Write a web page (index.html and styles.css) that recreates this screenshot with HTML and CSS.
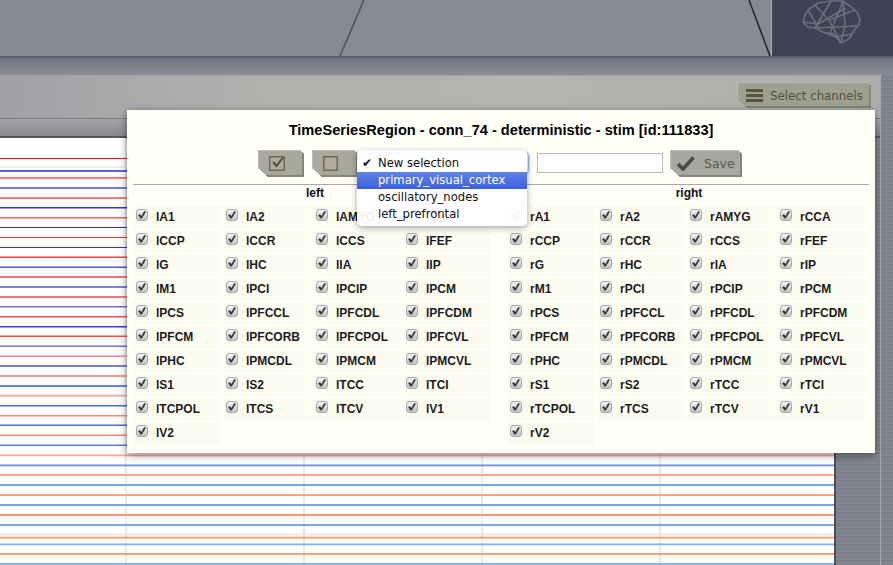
FILE: index.html
```html
<!DOCTYPE html>
<html lang="en">
<head>
  <meta charset="UTF-8" />
  <title>Select channels</title>
  <link rel="stylesheet" href="styles.css">
</head>
<body>
  <header class="topbar">
    <svg class="topbar-art" width="893" height="56" viewBox="0 0 893 56">
      <polygon points="364,0 749,0 770,56 340,56" fill="#888a94" />
      <line x1="364" y1="0" x2="340" y2="56" stroke="#4d4f5b" stroke-width="1.5" />
      <line x1="749" y1="0" x2="770" y2="56" stroke="#23252f" stroke-width="1.5" />
      <rect x="772" y="0" width="121" height="56" fill="#3f4254" />
      <line x1="771.5" y1="0" x2="771.5" y2="56" stroke="#aeb0ba" />
      <g fill="none" stroke="#6c6f7d" stroke-width="1.6">
        <polygon points="803,22 805,15 809,9 818,3 831,1 843,1 850,6 855,10 858,14 860,20 859,25 855,29 852,34 849,39 841,43 836,37 834,34 825,33 815,28 808,27" />
        <polyline points="815,5 829,20 841,43" />
        <polyline points="831,1 815,28" />
        <polyline points="843,1 830,33" />
        <polyline points="803,22 818,24 846,8" />
        <polyline points="815,28 857,26" />
        <polyline points="843,1 845,25 841,43" />
        <polyline points="808,10 819,29" />
        <polyline points="829,20 855,10" />
        <polyline points="820,31 836,37 852,34" />
      </g>
    </svg>
  </header>
  <div class="band"></div>

  <main class="panel">
    <div class="panel-head">
      <button class="btn btn-channels" type="button">
        <span class="bars"><i></i><i></i><i></i></span>
        <span class="btn-text">Select channels</span>
      </button>
    </div>
    <div class="panel-sub"></div>
    <div class="chart-row">
      <div class="chart">
        <svg width="834" height="427" viewBox="0 138 834 427">
          <rect x="0" y="166" width="834" height="2" fill="#eeeeee" />
          <rect x="0" y="533" width="834" height="3" fill="#eeeeee" />
          <g stroke="#e2e2e2" stroke-width="1.5">
            <line x1="126" y1="138" x2="126" y2="565" />
            <line x1="304" y1="138" x2="304" y2="565" />
            <line x1="482" y1="138" x2="482" y2="565" />
            <line x1="660" y1="138" x2="660" y2="565" />
          </g>
          <g fill="none">
            <line x1="0" x2="834" y1="158.5" y2="158.5" stroke="#f50f0f" />
            <line x1="0" x2="834" y1="171" y2="171" stroke="#2a2ad8" stroke-width="1.4" />
            <line x1="0" x2="834" y1="178" y2="178" stroke="#f85050" stroke-width="1.5" />
            <line x1="0" x2="834" y1="188" y2="188" stroke="#4a4ad8" stroke-width="1.6" />
            <line x1="0" x2="834" y1="198" y2="198" stroke="#f47c7c" stroke-width="2" />
            <line x1="0" x2="834" y1="207.7" y2="207.7" stroke="#3535d0" stroke-width="1.5" />
            <line x1="0" x2="834" y1="217.7" y2="217.7" stroke="#f86060" stroke-width="1.5" />
            <line x1="0" x2="834" y1="227.5" y2="227.5" stroke="#3030e0" />
            <line x1="0" x2="834" y1="237.5" y2="237.5" stroke="#f83030" />
            <line x1="0" x2="834" y1="247.5" y2="247.5" stroke="#3030e0" />
            <line x1="0" x2="834" y1="257.3" y2="257.3" stroke="#f84040" stroke-width="1.4" />
            <line x1="0" x2="834" y1="267.3" y2="267.3" stroke="#5858d0" stroke-width="1.6" />
            <line x1="0" x2="834" y1="277" y2="277" stroke="#f47474" stroke-width="2" />
            <line x1="0" x2="834" y1="287" y2="287" stroke="#8080d8" stroke-width="2" />
            <line x1="0" x2="834" y1="297" y2="297" stroke="#f87878" stroke-width="1.8" />
            <line x1="0" x2="834" y1="306.7" y2="306.7" stroke="#6c6cdc" stroke-width="1.6" />
            <line x1="0" x2="834" y1="316.7" y2="316.7" stroke="#f84c4c" stroke-width="1.6" />
            <line x1="0" x2="834" y1="326.7" y2="326.7" stroke="#3c3cd8" stroke-width="1.5" />
            <line x1="0" x2="834" y1="336.3" y2="336.3" stroke="#f85040" stroke-width="1.5" />
            <line x1="0" x2="834" y1="346.3" y2="346.3" stroke="#6c78dc" stroke-width="1.6" />
            <line x1="0" x2="834" y1="356.3" y2="356.3" stroke="#fa8c8c" stroke-width="1.6" />
            <line x1="0" x2="834" y1="366" y2="366" stroke="#7c80d4" stroke-width="1.8" />
            <line x1="0" x2="834" y1="376" y2="376" stroke="#fa9c94" stroke-width="1.8" />
            <line x1="0" x2="834" y1="386" y2="386" stroke="#6c80e0" stroke-width="2" />
            <line x1="0" x2="834" y1="395.7" y2="395.7" stroke="#faa8a0" stroke-width="1.8" />
            <line x1="0" x2="834" y1="405.7" y2="405.7" stroke="#4a70d8" stroke-width="1.6" />
            <line x1="0" x2="834" y1="415.7" y2="415.7" stroke="#f98c74" stroke-width="1.6" />
            <line x1="0" x2="834" y1="425.3" y2="425.3" stroke="#4a70d8" stroke-width="1.6" />
            <line x1="0" x2="834" y1="435.3" y2="435.3" stroke="#f98c74" stroke-width="1.6" />
            <line x1="0" x2="834" y1="445.3" y2="445.3" stroke="#5a80dc" stroke-width="1.6" />
            <line x1="0" x2="834" y1="455.3" y2="455.3" stroke="#faa890" stroke-width="1.8" />
            <line x1="0" x2="834" y1="465.3" y2="465.3" stroke="#6a90e0" stroke-width="1.8" />
            <line x1="0" x2="834" y1="475" y2="475" stroke="#fbac90" stroke-width="2" />
            <line x1="0" x2="834" y1="485" y2="485" stroke="#7aa4e8" stroke-width="2" />
            <line x1="0" x2="834" y1="495" y2="495" stroke="#fca47c" stroke-width="2" />
            <line x1="0" x2="834" y1="505" y2="505" stroke="#7aa4e8" stroke-width="2" />
            <line x1="0" x2="834" y1="515" y2="515" stroke="#fb9a70" stroke-width="1.8" />
            <line x1="0" x2="834" y1="525" y2="525" stroke="#7aa8e8" stroke-width="1.8" />
            <line x1="0" x2="834" y1="537.7" y2="537.7" stroke="#fb9a64" stroke-width="1.8" />
            <line x1="0" x2="834" y1="544.3" y2="544.3" stroke="#84b0ec" stroke-width="1.8" />
            <line x1="0" x2="834" y1="554" y2="554" stroke="#fba070" stroke-width="1.8" />
            <line x1="0" x2="834" y1="564" y2="564" stroke="#84b8ec" stroke-width="2" />
          </g>
        </svg>
      </div>
    </div>
  </main>

  <section class="modal">
    <h2 class="modal-title">TimeSeriesRegion - conn_74 - deterministic - stim [id:111833]</h2>

    <div class="toolbar">
      <button class="btn btn-icon" type="button">
        <svg width="16" height="15" viewBox="0 0 16 15">
          <rect x="0.75" y="0.75" width="14.5" height="13.5" fill="#b2ab9c" stroke="#6e685b" stroke-width="1.5" />
          <path d="M4 6l3.5 4L14 1.5" fill="none" stroke="#4e4c42" stroke-width="2" />
        </svg>
      </button>
      <button class="btn btn-icon" type="button">
        <svg width="15" height="15" viewBox="0 0 15 15">
          <rect x="0.75" y="0.75" width="13.5" height="13.5" fill="#b2ab9c" stroke="#6e685b" stroke-width="1.5" />
        </svg>
      </button>
      <div class="select-slot"></div>
      <input class="name-input" type="text" />
      <button class="btn btn-save" type="button">
        <svg width="18" height="15" viewBox="0 0 18 15">
          <path d="M1 8l5 5L16.5 1.5" fill="none" stroke="#4c4c40" stroke-width="3.6" />
        </svg>
        Save
      </button>
    </div>

    <div class="groups">
      <div class="group">
        <h3 class="group-name">left</h3>
        <div class="cells">
          <label class="cell"><i class="box"></i>lA1</label>
          <label class="cell"><i class="box"></i>lA2</label>
          <label class="cell"><i class="box"></i>lAMYG</label>
          <label class="cell"><i class="box"></i>lCCA</label>
          <label class="cell"><i class="box"></i>lCCP</label>
          <label class="cell"><i class="box"></i>lCCR</label>
          <label class="cell"><i class="box"></i>lCCS</label>
          <label class="cell"><i class="box"></i>lFEF</label>
          <label class="cell"><i class="box"></i>lG</label>
          <label class="cell"><i class="box"></i>lHC</label>
          <label class="cell"><i class="box"></i>lIA</label>
          <label class="cell"><i class="box"></i>lIP</label>
          <label class="cell"><i class="box"></i>lM1</label>
          <label class="cell"><i class="box"></i>lPCI</label>
          <label class="cell"><i class="box"></i>lPCIP</label>
          <label class="cell"><i class="box"></i>lPCM</label>
          <label class="cell"><i class="box"></i>lPCS</label>
          <label class="cell"><i class="box"></i>lPFCCL</label>
          <label class="cell"><i class="box"></i>lPFCDL</label>
          <label class="cell"><i class="box"></i>lPFCDM</label>
          <label class="cell"><i class="box"></i>lPFCM</label>
          <label class="cell"><i class="box"></i>lPFCORB</label>
          <label class="cell"><i class="box"></i>lPFCPOL</label>
          <label class="cell"><i class="box"></i>lPFCVL</label>
          <label class="cell"><i class="box"></i>lPHC</label>
          <label class="cell"><i class="box"></i>lPMCDL</label>
          <label class="cell"><i class="box"></i>lPMCM</label>
          <label class="cell"><i class="box"></i>lPMCVL</label>
          <label class="cell"><i class="box"></i>lS1</label>
          <label class="cell"><i class="box"></i>lS2</label>
          <label class="cell"><i class="box"></i>lTCC</label>
          <label class="cell"><i class="box"></i>lTCI</label>
          <label class="cell"><i class="box"></i>lTCPOL</label>
          <label class="cell"><i class="box"></i>lTCS</label>
          <label class="cell"><i class="box"></i>lTCV</label>
          <label class="cell"><i class="box"></i>lV1</label>
          <label class="cell"><i class="box"></i>lV2</label>
        </div>
      </div>
      <div class="group">
        <h3 class="group-name">right</h3>
        <div class="cells">
          <label class="cell"><i class="box"></i>rA1</label>
          <label class="cell"><i class="box"></i>rA2</label>
          <label class="cell"><i class="box"></i>rAMYG</label>
          <label class="cell"><i class="box"></i>rCCA</label>
          <label class="cell"><i class="box"></i>rCCP</label>
          <label class="cell"><i class="box"></i>rCCR</label>
          <label class="cell"><i class="box"></i>rCCS</label>
          <label class="cell"><i class="box"></i>rFEF</label>
          <label class="cell"><i class="box"></i>rG</label>
          <label class="cell"><i class="box"></i>rHC</label>
          <label class="cell"><i class="box"></i>rIA</label>
          <label class="cell"><i class="box"></i>rIP</label>
          <label class="cell"><i class="box"></i>rM1</label>
          <label class="cell"><i class="box"></i>rPCI</label>
          <label class="cell"><i class="box"></i>rPCIP</label>
          <label class="cell"><i class="box"></i>rPCM</label>
          <label class="cell"><i class="box"></i>rPCS</label>
          <label class="cell"><i class="box"></i>rPFCCL</label>
          <label class="cell"><i class="box"></i>rPFCDL</label>
          <label class="cell"><i class="box"></i>rPFCDM</label>
          <label class="cell"><i class="box"></i>rPFCM</label>
          <label class="cell"><i class="box"></i>rPFCORB</label>
          <label class="cell"><i class="box"></i>rPFCPOL</label>
          <label class="cell"><i class="box"></i>rPFCVL</label>
          <label class="cell"><i class="box"></i>rPHC</label>
          <label class="cell"><i class="box"></i>rPMCDL</label>
          <label class="cell"><i class="box"></i>rPMCM</label>
          <label class="cell"><i class="box"></i>rPMCVL</label>
          <label class="cell"><i class="box"></i>rS1</label>
          <label class="cell"><i class="box"></i>rS2</label>
          <label class="cell"><i class="box"></i>rTCC</label>
          <label class="cell"><i class="box"></i>rTCI</label>
          <label class="cell"><i class="box"></i>rTCPOL</label>
          <label class="cell"><i class="box"></i>rTCS</label>
          <label class="cell"><i class="box"></i>rTCV</label>
          <label class="cell"><i class="box"></i>rV1</label>
          <label class="cell"><i class="box"></i>rV2</label>
        </div>
      </div>
    </div>

    <ul class="menu">
      <li class="menu-item is-checked">New selection</li>
      <li class="menu-item is-active">primary_visual_cortex</li>
      <li class="menu-item">oscillatory_nodes</li>
      <li class="menu-item">left_prefrontal</li>
    </ul>
  </section>
</body>
</html>
```

FILE: styles.css
```css
html, body {
  margin: 0;
  padding: 0;
  height: 565px;
  overflow: hidden;
  background: repeating-linear-gradient(180deg, #7d7f8a 0, #7d7f8a 2px, #838591 2px, #838591 4px);
  font-family: "Liberation Sans", Arial, sans-serif;
}

/* top bar */
.topbar {
  height: 56px;
  background: repeating-linear-gradient(180deg, #86888f 0, #86888f 2px, #888a92 2px, #888a92 4px);
}

.topbar-art {
  display: block;
}

.band {
  height: 19px;
  border-top: 2px solid #5c5e6e;
  box-sizing: border-box;
  background: linear-gradient(180deg, #6f717e, #8c8d93);
}

/* panel with the chart */
.panel {
  width: 880px;
  height: 490px;
  border-right: 1px solid #a9abb3;
  display: flex;
  flex-direction: column;
}

.panel-head {
  height: 44px;
  box-sizing: border-box;
  padding: 6px 9px 0 0;
  display: flex;
  justify-content: flex-end;
  align-items: flex-start;
  background: linear-gradient(90deg, #a0a1a6 0, #b1b2ae 30%, #b4b5b0 60%, #aeafad 100%);
  border-top: 1px solid #a4a6ac;
  border-bottom: 1px solid #7b7c80;
}

.panel-sub {
  height: 17px;
  background: linear-gradient(180deg, #a6a6a9, #88898f);
  border-bottom: 2px solid #57585c;
}

.chart-row {
  flex: 1;
  display: flex;
}

.chart {
  width: 834px;
  background: #ffffff;
  border-right: 2px solid #4c4e58;
  overflow: hidden;
}

.chart svg {
  display: block;
}

/* buttons */
.btn {
  border: 0;
  padding: 0;
  height: 27px;
  display: flex;
  align-items: center;
  background: #a8a89c;
  color: #5b5b4e;
  font-family: "DejaVu Sans", sans-serif;
  font-size: 12px;
  clip-path: polygon(0 0, calc(100% - 4px) 0, 100% 4px, 100% 100%, 10px 100%, 0 calc(100% - 9px));
  box-shadow: inset -2px -2px 0 #84847a, inset 1px 1px 0 #bcbcb0;
}

.btn-channels {
  width: 134px;
  height: 26px;
  padding-left: 9px;
  gap: 7px;
  background: #a0a090;
}

.btn-text {
  padding-top: 2px;
  font-size: 11.8px;
  color: #4f4f44;
}

.bars {
  display: flex;
  flex-direction: column;
  gap: 2px;
}

.bars i {
  display: block;
  width: 17px;
  height: 3px;
  background: #55553f;
}

/* dialog */
.modal {
  position: absolute;
  left: 127px;
  top: 110px;
  width: 748px;
  height: 343px;
  box-sizing: border-box;
  padding: 12px 6px 0;
  background: #fffff8;
  box-shadow: 0 2px 8px rgba(0, 0, 0, 0.45);
}

.modal-title {
  margin: 0;
  height: 16px;
  line-height: 16px;
  font-size: 14.6px;
  text-align: center;
  color: #000;
}

.toolbar {
  margin-top: 12px;
  height: 35px;
  box-sizing: border-box;
  padding-left: 125px;
  display: flex;
  align-items: flex-start;
  border-bottom: 1px solid #aaa;
}

.btn-icon {
  width: 46px;
  margin-right: 8px;
  padding-left: 11px;
}

.select-slot {
  width: 171px;
  height: 20px;
  margin: 3px 9px 0 -9px;
  border-radius: 4px;
  box-shadow: 0 0 2px 1px #6d9fd8;
}

.name-input {
  width: 126px;
  height: 20px;
  box-sizing: border-box;
  margin: 3px 7px 0 0;
  border: 1px solid #b9b9b5;
  background: #fff;
}

.btn-save {
  width: 72px;
  padding-left: 7px;
  gap: 9px;
  font-size: 12.5px;
}

.groups {
  display: flex;
  gap: 14px;
}

.group {
  width: 360px;
}

.group-name {
  margin: 0;
  height: 21px;
  padding-left: 4px;
  line-height: 17px;
  font-size: 12px;
  text-align: center;
  color: #111;
}

.cells {
  display: grid;
  grid-template-columns: repeat(4, 88px);
  grid-auto-rows: 22px;
  gap: 2px;
}

.cell {
  display: flex;
  align-items: center;
  padding-left: 3px;
  gap: 8px;
  background: #fcfbf0;
  font-size: 12px;
  font-weight: bold;
  color: #1c1c1c;
}

.box {
  position: relative;
  width: 12px;
  height: 12px;
  margin-top: -4px;
  box-sizing: border-box;
  border: 1px solid #a8a8a8;
  border-radius: 3px;
  background: linear-gradient(180deg, #f4f4f4, #c4c4c4);
}

.box::after {
  content: "";
  position: absolute;
  inset: 1px;
  background: #3e3e3e;
  clip-path: polygon(0 50%, 25% 40%, 42% 62%, 78% 0, 100% 8%, 48% 95%, 30% 95%);
}

/* open dropdown over the toolbar */
.menu {
  position: absolute;
  left: 230px;
  top: 40px;
  width: 170px;
  height: 76px;
  box-sizing: border-box;
  margin: 0;
  padding: 5px 0 0;
  list-style: none;
  border-radius: 5px;
  background: rgba(255, 255, 255, 0.94);
  box-shadow: 0 2px 6px rgba(0, 0, 0, 0.35);
  font-family: "DejaVu Sans", sans-serif;
  font-size: 11.6px;
}

.menu-item {
  height: 17px;
  line-height: 17px;
  padding-left: 21px;
  color: #111;
  position: relative;
}

.is-checked::before {
  content: "\2714";
  position: absolute;
  left: 5px;
  font-size: 12px;
}

.is-active {
  background: linear-gradient(180deg, #6183ea, #3a5fdc);
  color: #fff;
}
```
